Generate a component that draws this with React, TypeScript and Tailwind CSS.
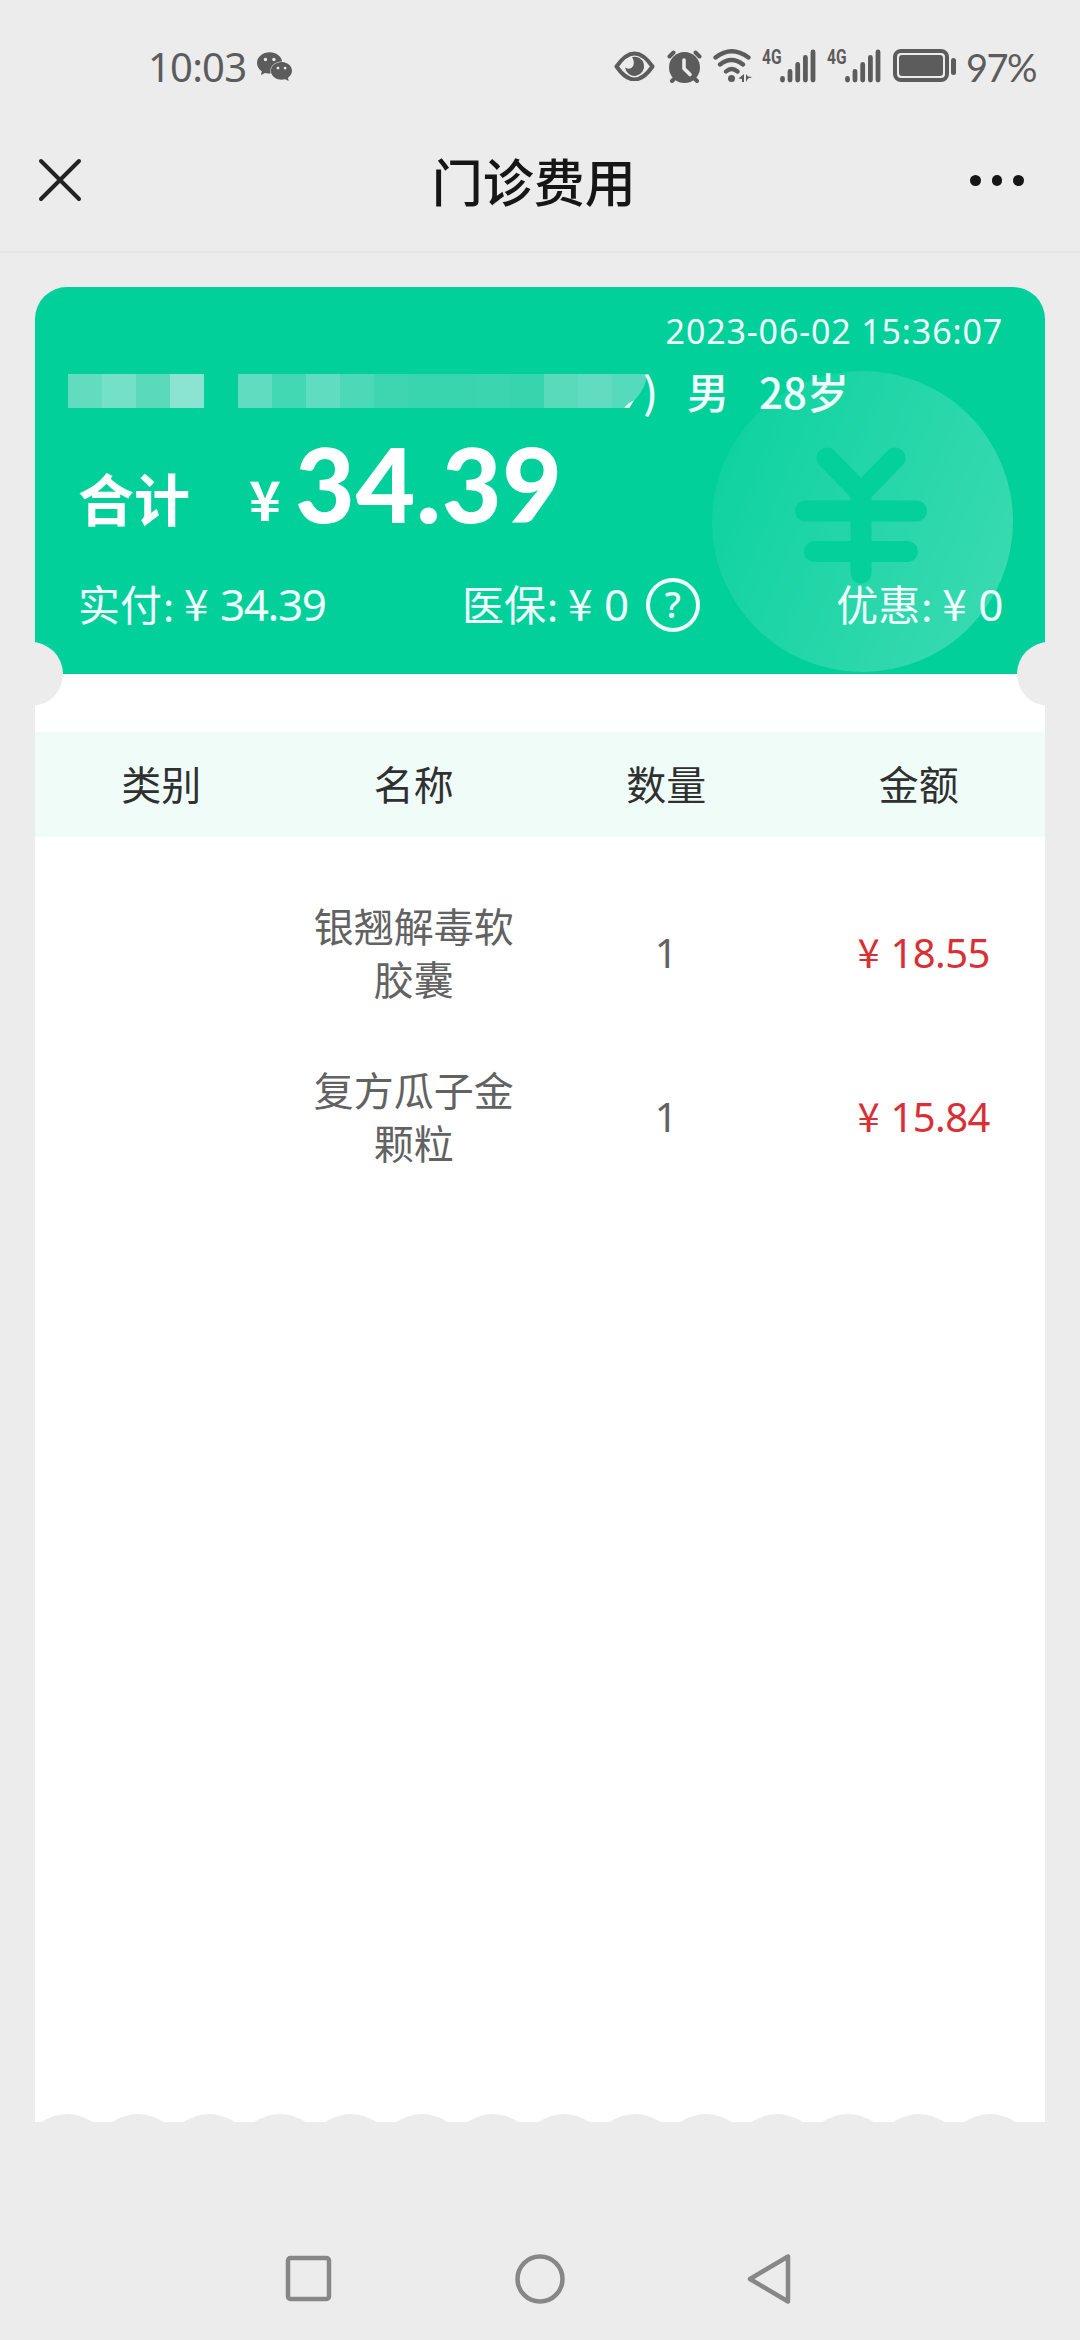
import { SiWechat } from 'react-icons/si'

const items = [
  { name: '银翘解毒软胶囊', qty: 1, price: '18.55' },
  { name: '复方瓜子金颗粒', qty: 1, price: '15.84' },
]

function Signal() {
  return (
    <div className="flex h-[34px] shrink-0">
      <span className="w-[18px] origin-left scale-x-[0.74] whitespace-nowrap font-['Roboto',sans-serif] text-[21px] leading-[16px] font-bold">4G</span>
      <svg width="36" height="34" viewBox="0 0 36 34" stroke="currentColor" strokeWidth="4.8" strokeLinecap="round">
        <path d="M2.5 29.5v1.5M10 22.5v8.5M17.7 15.5v15.5M25.4 8.5v22.5M33 3v28" />
      </svg>
    </div>
  )
}

function StatusBar() {
  return (
    <div className="flex h-[130px] items-start pt-[49px] pr-[45px] pl-[148px] text-[#5c5c5c]">
      <span className="mt-[-1px] w-[109px] font-['Noto_Sans',sans-serif] text-[40px] leading-[38px] tracking-[-0.8px]">10:03</span>
      <SiWechat size={35} />
      <div className="ml-auto flex h-[34px]">
        <svg className="mt-[2px] mr-3" width="41" height="30" viewBox="0 0 41 30" fill="none">
          <path d="M2.5 15.5Q20.5 -10.5 38.5 15.5Q20.5 41.5 2.5 15.5z" stroke="currentColor" strokeWidth="4" strokeLinejoin="round" />
          <path d="M18 6a9.6 9.6 0 1 1 -7 10.5c3 2.3 7.5 1 8.5-2.5c.9-3-.2-6-1.5-8z" fill="currentColor" />
        </svg>
        <svg className="mr-[11px]" width="35" height="34" viewBox="0 0 35 34" fill="none" strokeLinecap="round">
          <circle cx="17.5" cy="18.5" r="15.5" fill="currentColor" />
          <path d="M2.5 7.5l4-4M32.5 7.5l-4-4M5 32l4-4M30 32l-4-4" stroke="currentColor" strokeWidth="4" />
          <path d="M17 11v8.5l6 6" stroke="#ececec" strokeWidth="3.6" />
        </svg>
        <svg className="mr-[9px]" width="40" height="34" viewBox="0 0 40 34" fill="none" stroke="currentColor" strokeWidth="4.3" strokeLinecap="round">
          <path d="M2.5 8.5Q18.5-4 35.5 8.5M7 15.5Q18.5 6.5 30 15.5M13 22.5Q18.5 17.5 24.5 22.5" />
          <circle cx="18.5" cy="29.5" r="3.5" fill="currentColor" stroke="none" />
          <path d="M31 25v8h-2v-3l-3.5-.5zM33 25v8l2-3.5 4.5-1.5-4.5-.5z" fill="currentColor" stroke="none" />
        </svg>
        <Signal />
        <div className="w-[11px]" />
        <Signal />
        <div className="ml-[12px] h-[33px] w-[56px] rounded-[8px] border-4 border-current p-[2px]">
          <div className="h-full rounded-[3px] bg-current" />
        </div>
        <div className="mt-[9px] ml-[2px] h-[17px] w-[5px] rounded-full bg-current" />
        <span className="mt-[-1px] ml-[10px] w-[69px] whitespace-nowrap font-['Lato',sans-serif] text-[38px] leading-[38px] tracking-[-1.5px]">97%</span>
      </div>
    </div>
  )
}

function NavBar() {
  return (
    <div className="flex h-[123px] items-start justify-between border-b-2 border-[#e6e6e6] pt-[22px] pr-[56px] pl-[38px]">
      <svg className="mt-[6px]" width="44" height="44" viewBox="0 0 44 44" stroke="#222" strokeWidth="4" strokeLinecap="round">
        <path d="M3 3l38 38M41 3L3 41" />
      </svg>
      <h1 className="mt-[-2px] ml-[15px] text-[51px] leading-[60px] font-medium text-[#161616]">门诊费用</h1>
      <div className="mt-[23px] flex gap-[11px]">
        <i className="size-[10.5px] rounded-full bg-[#161616]" />
        <i className="size-[10.5px] rounded-full bg-[#161616]" />
        <i className="size-[10.5px] rounded-full bg-[#161616]" />
      </div>
    </div>
  )
}

// hidden part of the patient name and card number
function Mosaic() {
  return (
    <div className="flex h-[34px]">
      <i className="w-[34px] bg-[#62dcbf]" />
      <i className="w-[34px] bg-[#73e0c7]" />
      <i className="w-[34px] bg-[#5bd9bb]" />
      <i className="w-[34px] bg-[#8be3d2]" />
      <i className="w-[34px]" />
      <i className="w-[34px] bg-[#60dcc0]" />
      <i className="w-[34px] bg-[#41d8b3]" />
      <i className="w-[34px] bg-[#60dcc0]" />
      <i className="w-[34px] bg-[#4cd9b7]" />
      <i className="w-[34px] bg-[#3dd6b1]" />
      <i className="w-[68px] bg-[#39d5af]" />
      <i className="w-[34px] bg-[#3bd6b0]" />
      <i className="w-[34px] bg-[#37d5ae]" />
      <i className="w-[34px] bg-[#59dabb]" />
      <i className="w-[34px] bg-[#62dcc0]" />
      <svg width="35" height="34" viewBox="0 0 35 34">
        <path d="M0 0h35Q34 18 14 34H0z" fill="#55dabb" />
        <path d="M12 34.5q3-5 10-8l-5 8z" fill="#e8fff9" />
      </svg>
    </div>
  )
}

function Watermark() {
  return (
    <svg className="absolute top-[82px] left-[677px]" width="302" height="304" viewBox="0 0 302 304">
      <defs>
        <linearGradient id="coin" x1="0" y1="0.3" x2="1" y2="0.7">
          <stop offset="0" stopColor="#fff" stopOpacity="0.05" />
          <stop offset="1" stopColor="#fff" stopOpacity="0.22" />
        </linearGradient>
      </defs>
      <circle cx="150.5" cy="152.5" r="150.5" fill="url(#coin)" />
      <path d="M115 89l34 35 34-35M149 124v80M93.5 142h111M102.5 182.5h93" fill="none" stroke="#03d09b" strokeWidth="21" strokeLinecap="round" strokeLinejoin="round" />
    </svg>
  )
}

function Amount({ label, value }: { label: string, value: string }) {
  return (
    <div className="flex items-baseline whitespace-nowrap">
      <span className="text-[42px] leading-[50px]">{label}</span>
      <span className="ml-[1px] w-[21px] text-[40px] leading-[50px]">:</span>
      <span className="w-[36px] text-[44px] leading-[50px]">¥</span>
      <span className="font-['Noto_Sans',sans-serif] text-[44px] leading-[50px] tracking-[-1.4px]">{value}</span>
    </div>
  )
}

function Summary() {
  return (
    <div className="relative h-[387px] rounded-t-[32px] bg-[#02d09b] text-[#f0fffb]">
      <Watermark />
      <div className="relative">
        <p className="h-[87px] pt-[22px] pr-[42px] text-right font-['Noto_Sans',sans-serif] text-[34px] leading-[44px] tracking-[0.85px]">2023-06-02 15:36:07</p>
        <div className="flex h-[73px] pl-[33px] text-[42px] font-medium">
          <Mosaic />
          <span className="mt-[-10px] ml-[-4px] w-[44px] leading-[54px]">)</span>
          <span className="mt-[-10px] w-[72px] leading-[54px]">男</span>
          <span className="mt-[-10px] leading-[54px]">28岁</span>
        </div>
        <div className="mt-[-4px] flex h-[124px] items-baseline pl-[43px] font-bold text-white">
          <span className="relative -top-[2px] w-[171px] text-[56px] leading-[80px]">合计</span>
          <span className="relative -top-[2px] w-[46px] text-[54px] leading-[80px]">¥</span>
          <span className="font-['Lato',sans-serif] text-[103px] leading-[80px] font-black tracking-[0.9px]">34.39</span>
        </div>
        <div className="flex items-center justify-between pt-[7px] pr-[43px] pl-[43px]">
          <Amount label="实付" value="34.39" />
          <div className="flex items-center">
            <Amount label="医保" value="0" />
            <span className="mt-[4px] ml-[18px] flex size-[54px] items-center justify-center rounded-full border-4 border-current font-['Noto_Sans',sans-serif] text-[36px] leading-none font-medium">?</span>
          </div>
          <Amount label="优惠" value="0" />
        </div>
      </div>
      <i className="absolute -bottom-8 left-[-36px] size-16 rounded-full bg-[#ececec]" />
      <i className="absolute right-[-36px] -bottom-8 size-16 rounded-full bg-[#ececec]" />
    </div>
  )
}

function FeeTable() {
  return (
    <div className="h-[1440px] bg-white pt-[58px] text-center text-[40px]">
      <div className="grid h-[105px] grid-cols-4 items-center bg-[#effcf8] pb-[4px] text-[#303030]">
        <span>类别</span>
        <span>名称</span>
        <span>数量</span>
        <span>金额</span>
      </div>
      <div className="flex flex-col gap-[58px] pt-[62px]">
        {items.map((item) => (
          <div key={item.name} className="grid grid-cols-4 items-center leading-[53px] text-[#626262]">
            <span />
            <span className="px-[26px]">{item.name}</span>
            <span className="font-['Noto_Sans',sans-serif]">{item.qty}</span>
            <span className="flex items-baseline pl-[65px] text-[#d83034]">
              <span className="w-[33px] text-left">¥</span>
              <span className="font-['Noto_Sans',sans-serif] tracking-[-0.6px]">{item.price}</span>
            </span>
          </div>
        ))}
      </div>
    </div>
  )
}

function TornEdge() {
  return (
    <svg className="block" width="1010" height="8" viewBox="0 0 1010 8">
      <defs>
        <pattern id="scallop" x="-3.5" y="0" width="71" height="8" patternUnits="userSpaceOnUse">
          <path d="M0 0H71V8H61Q35.5-8 10 8H0z" fill="#fff" />
        </pattern>
      </defs>
      <rect width="982" height="8" fill="url(#scallop)" />
      <rect x="982" width="28" height="8" fill="#fff" />
    </svg>
  )
}

function SystemNav() {
  return (
    <div className="mt-[131px] flex justify-center gap-[182px] text-[#878787]">
      <svg width="50" height="52" viewBox="0 0 50 52" fill="none" stroke="currentColor" strokeWidth="4.5">
        <rect x="5" y="5" width="41" height="41" rx="2.5" />
      </svg>
      <svg width="50" height="52" viewBox="0 0 50 52" fill="none" stroke="currentColor" strokeWidth="4.5">
        <circle cx="25" cy="26" r="22.5" />
      </svg>
      <svg width="50" height="52" viewBox="0 0 50 52" fill="none" stroke="currentColor" strokeWidth="4.5" strokeLinejoin="round">
        <path d="M41 3.5v45L3 26z" />
      </svg>
    </div>
  )
}

export default function App() {
  return (
    <div className="h-[2340px] w-[1080px] overflow-hidden bg-[#ececec] font-['Noto_Sans_CJK_SC',sans-serif]">
      <StatusBar />
      <NavBar />
      <main className="mx-[35px] pt-[34px]">
        <Summary />
        <FeeTable />
        <TornEdge />
      </main>
      <SystemNav />
    </div>
  )
}
